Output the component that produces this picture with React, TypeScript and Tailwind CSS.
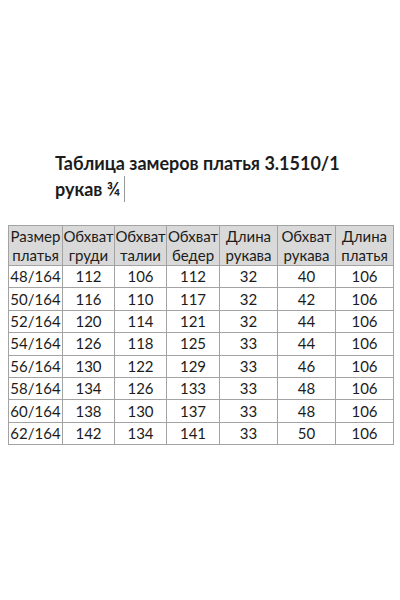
const headers = [
  ['Размер', 'платья'],
  ['Обхват', 'груди'],
  ['Обхват', 'талии'],
  ['Обхват', 'бедер'],
  ['Длина', 'рукава'],
  ['Обхват', 'рукава'],
  ['Длина', 'платья'],
];

const rows = [
  ['48/164', '112', '106', '112', '32', '40', '106'],
  ['50/164', '116', '110', '117', '32', '42', '106'],
  ['52/164', '120', '114', '121', '32', '44', '106'],
  ['54/164', '126', '118', '125', '33', '44', '106'],
  ['56/164', '130', '122', '129', '33', '46', '106'],
  ['58/164', '134', '126', '133', '33', '48', '106'],
  ['60/164', '138', '130', '137', '33', '48', '106'],
  ['62/164', '142', '134', '141', '33', '50', '106'],
];

const widths = ['w-[54px]', 'w-[52px]', 'w-[52px]', 'w-[53px]', 'w-[58px]', 'w-[58px]', 'w-[58px]'];

export default function App() {
  return (
    <div className="w-[400px] h-[600px] bg-white text-[#1c1c1c] font-['Lato','Open_Sans',sans-serif]">
      <div className="pt-[151px] pl-[55px] text-[18px] font-bold leading-[25px]">
        <div>Таблица замеров платья 3.1510/1</div>
        <div className="flex items-center">
          <span>рукав ¾</span>
          <span className="ml-[4px] w-px h-[26px] bg-[#999]" />
        </div>
      </div>
      <table className="mt-[23px] ml-[8px] border-collapse text-[15px] leading-[19px]">
        <thead>
          <tr className="bg-[#d9d9d9]">
            {headers.map((h, i) => (
              <th
                key={i}
                className={`${widths[i]} h-[40px] border border-[#a3a3a3] font-normal text-center p-0`}
              >
                <div>{h[0]}</div>
                <div>{h[1]}</div>
              </th>
            ))}
          </tr>
        </thead>
        <tbody>
          {rows.map((r, ri) => (
            <tr key={ri}>
              {r.map((c, ci) => (
                <td key={ci} className="h-[22.4px] border border-[#a3a3a3] text-center p-0">
                  {c}
                </td>
              ))}
            </tr>
          ))}
        </tbody>
      </table>
    </div>
  );
}
